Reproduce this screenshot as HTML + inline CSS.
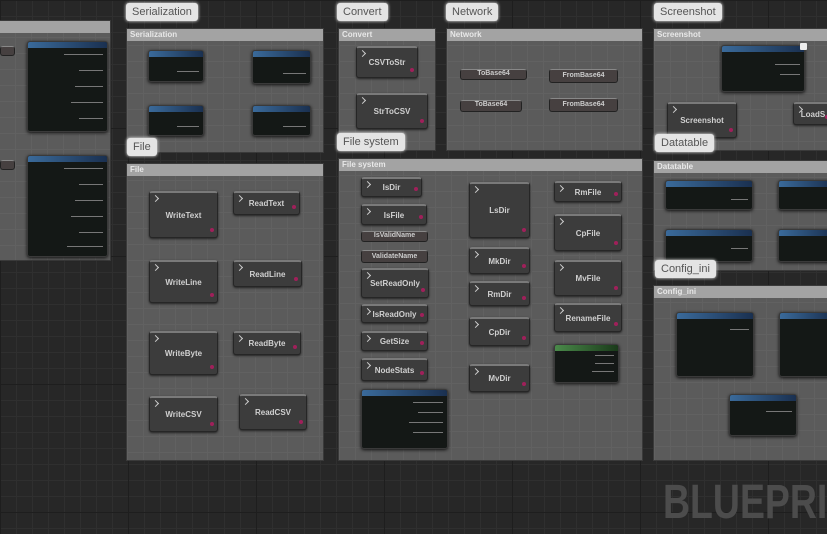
<!DOCTYPE html>
<html><head><meta charset="utf-8"><style>
*{margin:0;padding:0;box-sizing:border-box}
html,body{width:827px;height:534px;overflow:hidden}
body{position:relative;font-family:"Liberation Sans",sans-serif;
background-color:#272727;
background-image:linear-gradient(#1e1e1e 1px,transparent 1px),linear-gradient(90deg,#1e1e1e 1px,transparent 1px),linear-gradient(#2f2f2f 1px,transparent 1px),linear-gradient(90deg,#2f2f2f 1px,transparent 1px);
background-size:128px 128px,128px 128px,16px 16px,16px 16px;}
#w{position:absolute;left:0;top:0;width:827px;height:534px;overflow:hidden}
.c{position:absolute;background:#5b5b5b;border:1px solid #3a3a3a;
background-image:linear-gradient(#616161 1px,transparent 1px),linear-gradient(90deg,#616161 1px,transparent 1px);background-size:16px 16px}
.c .h{position:absolute;left:0;right:0;top:0;height:12px;background:#a3a3a3;color:#e8e8e8;font-size:8px;line-height:12px;padding-left:3px;font-weight:bold}
.b{position:absolute;background:#e4e4e4;color:#555;font-size:11px;line-height:18px;padding:0 6px;border-radius:3px;box-shadow:0 0 3px #fff}
.g{position:absolute;background:#3c3c3c;border:1px solid #262626;border-top:2px solid #7a7a7a;border-radius:3px;color:#d0d0d0;font-size:8px;font-weight:bold;display:flex;align-items:center;justify-content:center;box-shadow:0 1px 2px #222}
.g:before{content:"";position:absolute;left:3px;top:3px;width:4px;height:4px;border:1px solid #ccc;border-left:none;border-bottom:none;transform:rotate(45deg)}
.g:after{content:"";position:absolute;right:3px;bottom:5px;width:4px;height:4px;border-radius:2px;background:#a0205a}
.n{position:absolute;background:#141816;border:1px solid #3a3a3a;border-radius:3px;box-shadow:0 1px 3px #111}
.n .t{height:6px;background:linear-gradient(90deg,#3a6a9a,#1a3050);border-radius:2px 2px 0 0}
.n.gr .t{background:linear-gradient(90deg,#4a8a4a,#1a3a1a)}
.n .l{position:absolute;right:4px;width:50%;height:1px;background:#777}
.p{position:absolute;height:9px;border-radius:3px;background:#464040;border:1px solid #222;border-top:1px solid #888;color:#ccc;font-size:7px;font-weight:bold;text-align:center;line-height:8px}
</style></head><body><div id="w">

<div class="c" style="left:-2px;top:20px;width:113px;height:241px"><div class="h"></div></div>
<div class="p" style="left:0;top:46px;width:15px;height:10px"></div>
<div class="p" style="left:0;top:160px;width:15px;height:10px"></div>
<div class="n" style="left:27px;top:41px;width:81px;height:91px"><div class="t"></div>
<div class="l" style="top:12px"></div><div class="l" style="top:28px;width:30%"></div><div class="l" style="top:44px;width:35%"></div><div class="l" style="top:60px;width:40%"></div><div class="l" style="top:76px;width:30%"></div></div>
<div class="n" style="left:27px;top:155px;width:81px;height:102px"><div class="t"></div>
<div class="l" style="top:12px"></div><div class="l" style="top:28px;width:30%"></div><div class="l" style="top:44px;width:35%"></div><div class="l" style="top:60px;width:40%"></div><div class="l" style="top:76px;width:30%"></div><div class="l" style="top:90px;width:45%"></div></div>

<div class="c" style="left:126px;top:28px;width:198px;height:125px"><div class="h">Serialization</div></div>
<div class="b" style="left:126px;top:3px">Serialization</div>
<div class="n" style="left:148px;top:50px;width:56px;height:32px"><div class="t"></div><div class="l" style="top:20px;width:40%"></div></div>
<div class="n" style="left:252px;top:50px;width:59px;height:34px"><div class="t"></div><div class="l" style="top:22px;width:40%"></div></div>
<div class="n" style="left:148px;top:105px;width:56px;height:31px"><div class="t"></div><div class="l" style="top:20px;width:40%"></div></div>
<div class="n" style="left:252px;top:105px;width:59px;height:31px"><div class="t"></div><div class="l" style="top:20px;width:40%"></div></div>

<div class="c" style="left:126px;top:163px;width:198px;height:298px"><div class="h">File</div></div>
<div class="b" style="left:127px;top:138px">File</div>
<div class="g" style="left:149px;top:191px;width:69px;height:47px">WriteText</div>
<div class="g" style="left:233px;top:191px;width:67px;height:24px">ReadText</div>
<div class="g" style="left:149px;top:260px;width:69px;height:43px">WriteLine</div>
<div class="g" style="left:233px;top:260px;width:69px;height:27px">ReadLine</div>
<div class="g" style="left:149px;top:331px;width:69px;height:44px">WriteByte</div>
<div class="g" style="left:233px;top:331px;width:68px;height:24px">ReadByte</div>
<div class="g" style="left:149px;top:396px;width:69px;height:36px">WriteCSV</div>
<div class="g" style="left:239px;top:394px;width:68px;height:36px">ReadCSV</div>

<div class="c" style="left:338px;top:28px;width:98px;height:123px"><div class="h">Convert</div></div>
<div class="b" style="left:337px;top:3px">Convert</div>
<div class="g" style="left:356px;top:46px;width:62px;height:32px">CSVToStr</div>
<div class="g" style="left:356px;top:93px;width:72px;height:36px">StrToCSV</div>

<div class="c" style="left:446px;top:28px;width:197px;height:123px"><div class="h">Network</div></div>
<div class="b" style="left:446px;top:3px">Network</div>
<div class="p" style="left:460px;top:69px;width:67px;height:11px">ToBase64</div>
<div class="p" style="left:549px;top:69px;width:69px;height:14px;line-height:12px">FromBase64</div>
<div class="p" style="left:460px;top:100px;width:62px;height:12px">ToBase64</div>
<div class="p" style="left:549px;top:98px;width:69px;height:14px;line-height:12px">FromBase64</div>

<div class="c" style="left:338px;top:158px;width:305px;height:303px"><div class="h">File system</div></div>
<div class="b" style="left:337px;top:133px">File system</div>
<div class="g" style="left:361px;top:177px;width:61px;height:20px">IsDir</div>
<div class="g" style="left:361px;top:204px;width:66px;height:21px">IsFile</div>
<div class="p" style="left:361px;top:231px;width:67px;height:11px">IsValidName</div>
<div class="p" style="left:361px;top:250px;width:67px;height:13px;line-height:11px">ValidateName</div>
<div class="g" style="left:361px;top:268px;width:68px;height:30px">SetReadOnly</div>
<div class="g" style="left:361px;top:304px;width:67px;height:19px">IsReadOnly</div>
<div class="g" style="left:361px;top:331px;width:67px;height:20px">GetSize</div>
<div class="g" style="left:361px;top:358px;width:67px;height:23px">NodeStats</div>
<div class="n" style="left:361px;top:389px;width:87px;height:60px"><div class="t"></div><div class="l" style="top:12px;width:35%"></div><div class="l" style="top:22px;width:30%"></div><div class="l" style="top:32px;width:40%"></div><div class="l" style="top:42px;width:35%"></div></div>
<div class="g" style="left:469px;top:182px;width:61px;height:56px">LsDir</div>
<div class="g" style="left:469px;top:247px;width:61px;height:27px">MkDir</div>
<div class="g" style="left:469px;top:281px;width:61px;height:25px">RmDir</div>
<div class="g" style="left:469px;top:317px;width:61px;height:29px">CpDir</div>
<div class="g" style="left:469px;top:364px;width:61px;height:28px">MvDir</div>
<div class="g" style="left:554px;top:181px;width:68px;height:21px">RmFile</div>
<div class="g" style="left:554px;top:214px;width:68px;height:37px">CpFile</div>
<div class="g" style="left:554px;top:260px;width:68px;height:36px">MvFile</div>
<div class="g" style="left:554px;top:303px;width:68px;height:29px">RenameFile</div>
<div class="n gr" style="left:554px;top:344px;width:65px;height:39px"><div class="t"></div><div class="l" style="top:10px;width:30%"></div><div class="l" style="top:18px;width:30%"></div><div class="l" style="top:26px;width:35%"></div></div>

<div class="c" style="left:653px;top:28px;width:180px;height:123px"><div class="h">Screenshot</div></div>
<div class="b" style="left:654px;top:3px">Screenshot</div>
<div class="n" style="left:721px;top:45px;width:84px;height:47px"><div class="t"></div><div class="l" style="top:18px;width:30%"></div><div class="l" style="top:28px;width:25%"></div></div>
<div style="position:absolute;left:800px;top:43px;width:7px;height:7px;background:#eee;border-radius:1px"></div>
<div class="g" style="left:667px;top:102px;width:70px;height:36px">Screenshot</div>
<div class="g" style="left:793px;top:102px;width:40px;height:23px">LoadS</div>

<div class="c" style="left:653px;top:160px;width:180px;height:111px"><div class="h">Datatable</div></div>
<div class="b" style="left:655px;top:134px">Datatable</div>
<div class="n" style="left:665px;top:180px;width:88px;height:30px"><div class="t"></div><div class="l" style="top:18px;width:20%"></div></div>
<div class="n" style="left:778px;top:180px;width:55px;height:30px"><div class="t"></div></div>
<div class="n" style="left:665px;top:229px;width:88px;height:33px"><div class="t"></div><div class="l" style="top:18px;width:20%"></div></div>
<div class="n" style="left:778px;top:229px;width:55px;height:33px"><div class="t"></div></div>

<div class="c" style="left:653px;top:285px;width:180px;height:176px"><div class="h">Config_ini</div></div>
<div class="b" style="left:655px;top:260px">Config_ini</div>
<div class="n" style="left:676px;top:312px;width:78px;height:65px"><div class="t"></div><div class="l" style="top:16px;width:25%"></div></div>
<div class="n" style="left:779px;top:312px;width:54px;height:65px"><div class="t"></div></div>
<div class="n" style="left:729px;top:394px;width:68px;height:42px"><div class="t"></div><div class="l" style="top:16px;width:40%"></div></div>

<div style="position:absolute;left:663px;top:478px;font-size:48px;font-weight:bold;color:#4c4c4c;line-height:50px;white-space:nowrap;transform:scaleX(0.78);transform-origin:0 0">BLUEPRINT</div>
</div></body></html>
